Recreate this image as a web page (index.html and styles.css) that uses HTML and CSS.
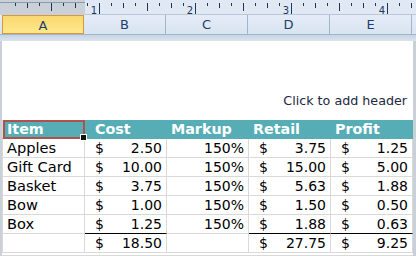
FILE: index.html
```html
<!DOCTYPE html>
<html lang="en">
<head>
  <meta charset="UTF-8" />
  <title>Sheet1 - Page Layout</title>
  <link rel="stylesheet" href="styles.css">
</head>
<body>
  <div class="ruler">
    <svg width="416" height="15" viewBox="0 0 416 15">
      <rect x="0" y="0" width="85" height="15" fill="#c9d0d8" />
      <line x1="0" y1="2.5" x2="85" y2="2.5" stroke="#8a9bb0" />
      <g stroke="#1f3560" stroke-width="1">
        <line x1="15.5" y1="3" x2="15.5" y2="6" />
        <line x1="27.5" y1="3" x2="27.5" y2="8" />
        <line x1="39.5" y1="3" x2="39.5" y2="6" />
        <line x1="51.5" y1="3" x2="51.5" y2="11" />
        <line x1="63.5" y1="3" x2="63.5" y2="6" />
        <line x1="75.5" y1="3" x2="75.5" y2="8" />
        <line x1="87.5" y1="3" x2="87.5" y2="6" />
        <line x1="99.5" y1="3" x2="99.5" y2="14" />
        <line x1="111.5" y1="3" x2="111.5" y2="6" />
        <line x1="123.5" y1="3" x2="123.5" y2="8" />
        <line x1="135.5" y1="3" x2="135.5" y2="6" />
        <line x1="147.5" y1="3" x2="147.5" y2="11" />
        <line x1="159.5" y1="3" x2="159.5" y2="6" />
        <line x1="171.5" y1="3" x2="171.5" y2="8" />
        <line x1="183.5" y1="3" x2="183.5" y2="6" />
        <line x1="195.5" y1="3" x2="195.5" y2="14" />
        <line x1="207.5" y1="3" x2="207.5" y2="6" />
        <line x1="219.5" y1="3" x2="219.5" y2="8" />
        <line x1="231.5" y1="3" x2="231.5" y2="6" />
        <line x1="243.5" y1="3" x2="243.5" y2="11" />
        <line x1="255.5" y1="3" x2="255.5" y2="6" />
        <line x1="267.5" y1="3" x2="267.5" y2="8" />
        <line x1="279.5" y1="3" x2="279.5" y2="6" />
        <line x1="291.5" y1="3" x2="291.5" y2="14" />
        <line x1="303.5" y1="3" x2="303.5" y2="6" />
        <line x1="315.5" y1="3" x2="315.5" y2="8" />
        <line x1="327.5" y1="3" x2="327.5" y2="6" />
        <line x1="339.5" y1="3" x2="339.5" y2="11" />
        <line x1="351.5" y1="3" x2="351.5" y2="6" />
        <line x1="363.5" y1="3" x2="363.5" y2="8" />
        <line x1="375.5" y1="3" x2="375.5" y2="6" />
        <line x1="387.5" y1="3" x2="387.5" y2="14" />
        <line x1="399.5" y1="3" x2="399.5" y2="6" />
        <line x1="411.5" y1="3" x2="411.5" y2="8" />
      </g>
      <g class="ruler-num">
        <text x="97" y="14" text-anchor="end">1</text>
        <text x="193" y="14" text-anchor="end">2</text>
        <text x="289" y="14" text-anchor="end">3</text>
        <text x="385" y="14" text-anchor="end">4</text>
      </g>
    </svg>
  </div>

  <div class="col-heads">
    <div class="col-head active">A</div>
    <div class="col-head">B</div>
    <div class="col-head">C</div>
    <div class="col-head">D</div>
    <div class="col-head">E</div>
  </div>
  <div class="band"></div>

  <div class="page">
    <div class="header-note">Click to add header</div>

    <table class="sheet">
      <thead>
        <tr>
          <th class="selected">Item</th>
          <th class="h-cost">Cost</th>
          <th>Markup</th>
          <th>Retail</th>
          <th>Profit</th>
        </tr>
      </thead>
      <tbody>
        <tr>
          <td>Apples</td>
          <td class="money"><span>$</span><span>2.50</span></td>
          <td class="pct">150%</td>
          <td class="money"><span>$</span><span>3.75</span></td>
          <td class="money"><span>$</span><span>1.25</span></td>
        </tr>
        <tr>
          <td>Gift Card</td>
          <td class="money"><span>$</span><span>10.00</span></td>
          <td class="pct">150%</td>
          <td class="money"><span>$</span><span>15.00</span></td>
          <td class="money"><span>$</span><span>5.00</span></td>
        </tr>
        <tr>
          <td>Basket</td>
          <td class="money"><span>$</span><span>3.75</span></td>
          <td class="pct">150%</td>
          <td class="money"><span>$</span><span>5.63</span></td>
          <td class="money"><span>$</span><span>1.88</span></td>
        </tr>
        <tr>
          <td>Bow</td>
          <td class="money"><span>$</span><span>1.00</span></td>
          <td class="pct">150%</td>
          <td class="money"><span>$</span><span>1.50</span></td>
          <td class="money"><span>$</span><span>0.50</span></td>
        </tr>
        <tr class="last">
          <td>Box</td>
          <td class="money ruled"><span>$</span><span>1.25</span></td>
          <td class="pct">150%</td>
          <td class="money ruled"><span>$</span><span>1.88</span></td>
          <td class="money ruled"><span>$</span><span>0.63</span></td>
        </tr>
        <tr class="total">
          <td></td>
          <td class="money"><span>$</span><span>18.50</span></td>
          <td></td>
          <td class="money"><span>$</span><span>27.75</span></td>
          <td class="money"><span>$</span><span>9.25</span></td>
        </tr>
      </tbody>
    </table>
    <div class="page-foot"></div>
  </div>
</body>
</html>
```

FILE: styles.css
```css
* {
  box-sizing: border-box;
}
body {
  margin: 0;
  width: 416px;
  height: 256px;
  overflow: hidden;
  background: #fff;
  font-family: "DejaVu Sans", sans-serif;
  color: #000;
}
.ruler {
  height: 15px;
  background: #dfe8f3;
  border-bottom: 1px solid #b9c7d8;
}
.ruler svg {
  display: block;
}
.ruler-num text {
  font-family: "DejaVu Sans", sans-serif;
  font-size: 10px;
  fill: #1f3560;
}
.col-heads {
  display: flex;
  height: 20px;
  padding-left: 2px;
  background: linear-gradient(#e4ecf7, #d9e4f1);
  border-bottom: 1px solid #9eb6ce;
}
.col-head {
  width: 82px;
  border-right: 1px solid #9eb6ce;
  text-align: center;
  font-size: 13px;
  line-height: 19px;
  color: #203e6a;
}
.col-head.active {
  background: linear-gradient(#f9d86f, #ffe88c);
  border: 1px solid #d8973a;
}
.band {
  height: 6px;
  background: linear-gradient(#c6d3e2, #dbe4ef);
}
.page {
  border-left: 2px solid #c9d0d8;
  border-right: 3px solid #c9d0d8;
  height: 215px;
  padding-top: 52px;
}
.header-note {
  text-align: right;
  padding-right: 6px;
  font-size: 12.7px;
  line-height: 15px;
  color: #1c2740;
}
.sheet {
  margin-top: 12px;
  border-collapse: separate;
  border-spacing: 0;
  table-layout: fixed;
  width: 411px;
  font-size: 14px;
}
.sheet th,
.sheet td {
  width: 82px;
  height: 19px;
  padding: 0 4px;
  border-right: 1px solid #d9d9d9;
  border-bottom: 1px solid #d9d9d9;
  white-space: nowrap;
  line-height: 18px;
}
.sheet th:first-child,
.sheet td:first-child {
  width: 83px;
  border-left: 1px solid #d9d9d9;
}
.sheet td:first-child {
  font-size: 14.6px;
}
.sheet th {
  background: #56adb5;
  color: #fff;
  text-align: left;
  font-weight: bold;
  border-color: #56adb5;
  font-size: 14.3px;
}
.sheet th.h-cost {
  padding-left: 10px;
}
.sheet th.selected {
  position: relative;
}
.sheet th.selected::after {
  content: "";
  position: absolute;
  inset: 0 -1px -1px 0;
  border: 2px solid #b2514c;
}
.sheet th.selected::before {
  content: "";
  position: absolute;
  right: -3px;
  bottom: -3px;
  width: 5px;
  height: 5px;
  background: #111;
  border: 1px solid #fff;
  z-index: 1;
}
.money span:first-child {
  float: left;
  padding-left: 6px;
}
.money {
  text-align: right;
  padding-right: 8px;
}
.pct {
  text-align: right;
}
.sheet .last td.ruled {
  border-bottom-color: #000;
}
.page-foot {
  border-top: 1px solid #d9d9d9;
  margin-top: 2px;
}
```
